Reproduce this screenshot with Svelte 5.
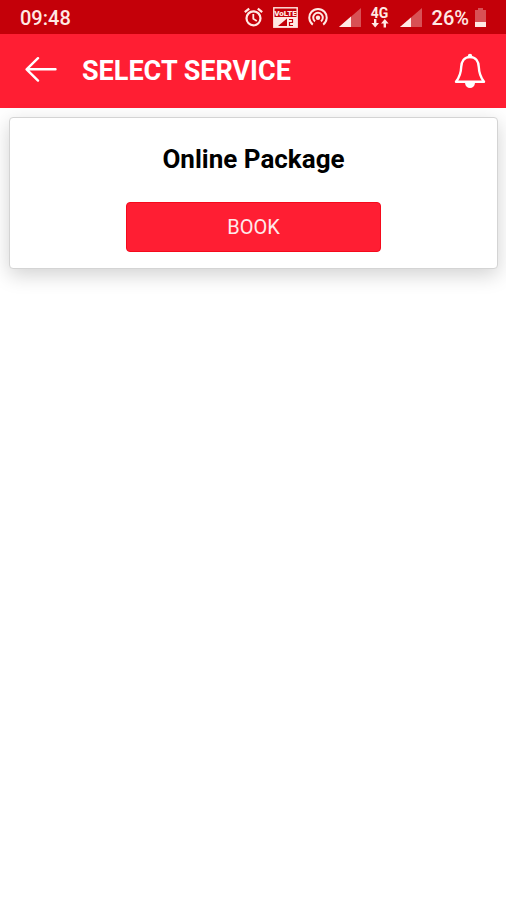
<script>
	let time = '09:48'
	let battery = 26
	let title = 'Select Service'

	let services = [
		{name: 'Online Package', action: 'Book'}
	]
</script>


<div class="status-bar">
	<span class="time">{time}</span>
	<div class="status-icons">
		<svg class="alarm" width="19" height="20" viewBox="0 0 19 20" fill="none" stroke="currentColor" aria-hidden="true">
			<circle cx="9.5" cy="11.3" r="7" stroke-width="2.2" />
			<path d="M0.8 5.2 L5.2 1.6 M18.2 5.2 L13.8 1.6" stroke-width="2.2" />
			<path d="M9.3 7 V11.8 L12.8 14" stroke-width="1.8" />
		</svg>
		<svg class="volte" width="25" height="21" viewBox="0 0 25 21" aria-hidden="true">
			<rect x="0.8" y="0.8" width="23.4" height="19.4" fill="none" stroke="currentColor" stroke-width="1.4" />
			<text x="12.5" y="8.8" text-anchor="middle">VoLTE</text>
			<rect x="1" y="10" width="23" height="10" fill="currentColor" />
			<path d="M5 19 L14 11.5 V19 Z" fill="#c40009" />
			<path d="M16 12.5 H19.5 V15.5 H16.5 V18.5 H20" fill="none" stroke="#c40009" stroke-width="1.2" />
		</svg>
		<svg class="hotspot" width="20" height="20" viewBox="0 0 20 20" fill="none" stroke="currentColor" stroke-width="2" aria-hidden="true">
			<path d="M4.8 17.6 A8.7 8.7 0 1 1 15.2 17.6" />
			<path d="M7 14.4 A4.8 4.8 0 1 1 13 14.4" />
			<circle cx="10" cy="10.8" r="2.2" fill="currentColor" stroke="none" />
		</svg>
		<svg class="signal" width="22" height="19" viewBox="0 0 22 19" fill="currentColor" aria-hidden="true">
			<path d="M0 19 L22 0 V19 Z" opacity="0.35" />
			<path d="M0 19 L12 8.6 V19 Z" />
		</svg>
		<div class="network">
			<span>4G</span>
			<svg width="18" height="9" viewBox="0 0 18 9" fill="currentColor" aria-hidden="true">
				<path d="M3 0 H5.4 V4 H8 L4.2 8.6 L0.4 4 H3 Z" />
				<path d="M12.6 8.6 H15 V4.6 H17.6 L13.8 0 L10 4.6 H12.6 Z" />
			</svg>
		</div>
		<svg class="signal" width="22" height="19" viewBox="0 0 22 19" fill="currentColor" aria-hidden="true">
			<path d="M0 19 L22 0 V19 Z" opacity="0.35" />
			<path d="M0 19 L11 9.5 V19 Z" />
		</svg>
		<span class="percent">{battery}%</span>
		<svg class="battery" width="11" height="19" viewBox="0 0 11 19" fill="currentColor" aria-hidden="true">
			<path d="M3 0 H8 V2 H11 V14 H0 V2 H3 Z" opacity="0.35" />
			<rect y="14" width="11" height="5" />
		</svg>
	</div>
</div>

<header>
	<button class="icon-btn" type="button" aria-label="Back">
		<svg width="32" height="28" viewBox="0 0 32 28" fill="none" stroke="currentColor" stroke-width="2.4" stroke-linecap="round" stroke-linejoin="round" aria-hidden="true">
			<path d="M30.5 12.3 H2 M13 1.2 L1.6 12.3 L13 23.6" />
		</svg>
	</button>
	<h1>{title}</h1>
	<button class="icon-btn" type="button" aria-label="Notifications">
		<svg width="32" height="36" viewBox="0 0 32 36" aria-hidden="true">
			<path d="M16 4 C10 4 7.4 8.8 7.2 14 C7 20.5 5.6 24 2 28.8 H30 C26.4 24 25 20.5 24.8 14 C24.6 8.8 22 4 16 4 Z" fill="none" stroke="currentColor" stroke-width="2.4" stroke-linejoin="round" />
			<circle cx="16" cy="3" r="2.2" fill="currentColor" />
			<path d="M11 30 H21 C20.6 33.2 18.6 35 16 35 C13.4 35 11.4 33.2 11 30 Z" fill="currentColor" />
		</svg>
	</button>
</header>

<main>
	{#each services as service}
		<section class="card">
			<h2>{service.name}</h2>
			<button class="book-btn" type="button">{service.action}</button>
		</section>
	{/each}
</main>

<style>
	:global(body){
		background: #fff;
		font-family: Roboto, "Liberation Sans", sans-serif;
	}
	.status-bar{
		display: flex;
		align-items: center;
		justify-content: space-between;
		height: 34px;
		padding: 0 20px;
		box-sizing: border-box;
		background: #c40009;
		color: #ffe9e4;
		font-size: 20px;
		font-weight: 500;
		line-height: 24px;
	}
	.time, .percent{
		padding-top: 2px;
	}
	.status-icons{
		display: flex;
		align-items: center;
	}
	.status-icons svg{
		display: block;
	}
	.volte, .hotspot{
		margin-left: 10px;
	}
	.volte text{
		fill: currentColor;
		font-size: 8px;
		font-weight: 900;
	}
	.signal{
		margin-left: 11px;
	}
	.network{
		display: flex;
		flex-direction: column;
		align-items: center;
		margin-left: 10px;
		font-size: 14px;
		font-weight: 700;
		line-height: 12px;
	}
	.percent{
		margin-left: 10px;
	}
	.battery{
		margin-left: 6px;
	}
	header{
		display: flex;
		align-items: center;
		height: 74px;
		padding: 0 20px 0 25px;
		box-sizing: border-box;
		background: #ff1e33;
		color: #fff;
	}
	h1{
		flex: 1;
		margin: 0 0 0 25px;
		font-size: 27px;
		font-weight: 700;
		line-height: 32px;
		text-transform: uppercase;
	}
	.icon-btn{
		padding: 0;
		border: 0;
		background: none;
		color: inherit;
		cursor: pointer;
	}
	.icon-btn svg{
		display: block;
	}
	main{
		padding: 9px 8px 40px 9px;
	}
	.card{
		display: flex;
		flex-direction: column;
		align-items: center;
		padding: 25px 16px 16px;
		border: 1px solid #d4d4d4;
		border-radius: 4px;
		background: #fff;
		box-shadow: 0 6px 20px rgba(0, 0, 0, 0.18);
	}
	h2{
		margin: 0 0 27px;
		color: #000;
		font-size: 26px;
		font-weight: 700;
		line-height: 32px;
	}
	.book-btn{
		width: 56%;
		height: 50px;
		border: 1px solid #f50a1c;
		border-radius: 4px;
		background: #ff1e33;
		color: #ffe9ea;
		font-family: inherit;
		font-size: 20px;
		text-transform: uppercase;
		cursor: pointer;
	}
</style>
